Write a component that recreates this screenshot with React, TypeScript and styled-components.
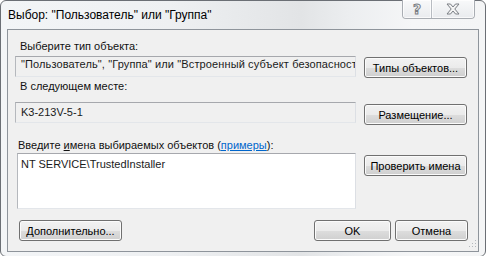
import React from 'react';
import styled, { createGlobalStyle } from 'styled-components';

const GlobalStyle = createGlobalStyle`
  html, body {
    margin: 0;
    padding: 0;
    background: #ffffff;
    overflow: hidden;
  }
`;

const Window = styled.div`
  width: 486px;
  height: 257px;
  box-sizing: border-box;
  border: 1px solid #6b6f75;
  border-radius: 6px;
  background: linear-gradient(
    to right,
    #f3f5f7 0%,
    #eef0f2 35%,
    #e2e4e6 62%,
    #eceef0 72%,
    #f5f6f7 85%,
    #f4f5f6 100%
  );
  display: flex;
  flex-direction: column;
  padding: 0 6px 4px;
  font-family: 'Liberation Sans', Arial, sans-serif;
`;

const TitleBar = styled.div`
  height: 28px;
  flex: none;
  display: flex;
  align-items: flex-start;
  justify-content: space-between;
`;

const Title = styled.div`
  margin-top: 7px;
  margin-left: 1px;
  font-size: 12px;
  line-height: 14px;
  color: #000;
`;

const CaptionGroup = styled.div`
  display: flex;
  height: 18px;
  margin-top: -1px;
  margin-right: 4px;
  border: 1px solid #a9adb3;
  border-top: none;
  border-radius: 0 0 4px 4px;
  background: linear-gradient(#f8f9fa, #e9ebee);
  overflow: hidden;
`;

const CaptionButton = styled.div<{ $w: number; $divider?: boolean }>`
  width: ${(p) => p.$w}px;
  display: flex;
  align-items: center;
  justify-content: center;
  border-right: ${(p) => (p.$divider ? '1px solid #b8bcc2' : 'none')};
  box-shadow: inset 0 0 0 1px rgba(255, 255, 255, 0.7);
`;

const HelpGlyph = styled.span`
  font-family: 'DejaVu Sans', sans-serif;
  font-size: 14px;
  font-weight: bold;
  line-height: 14px;
  color: #f4f4f4;
  -webkit-text-stroke: 1px #7a7e84;
`;

const Client = styled.div`
  position: relative;
  flex: 1;
  background: #f0f0f0;
  border: 1px solid #8e949b;
  padding: 10px 10px 0 7px;
  display: flex;
  flex-direction: column;
  font-size: 11px;
  color: #111;
`;

const Group = styled.div<{ $top?: number }>`
  display: grid;
  grid-template-columns: 341px 103px;
  column-gap: 8px;
  align-items: start;
  margin-top: ${(p) => p.$top ?? 0}px;
`;

const Label = styled.div<{ $indent?: number; $gap?: number }>`
  grid-column: 1 / 3;
  padding-left: ${(p) => p.$indent ?? 0}px;
  line-height: 13px;
  height: 13px;
  margin-bottom: ${(p) => p.$gap ?? 3}px;
  white-space: nowrap;
`;

const Field = styled.div<{ $h?: number; $white?: boolean; $pad?: number; $spacing?: number }>`
  box-sizing: border-box;
  height: ${(p) => p.$h ?? 21}px;
  border: 1px solid;
  border-color: #a6a8ad #dcdfe4 #e3e6ea #b5b8bd;
  background: ${(p) => (p.$white ? '#ffffff' : '#f0f0f0')};
  padding: ${(p) => p.$pad ?? 3}px ${(p) => (p.$white ? 3 : 5)}px 0;
  line-height: 13px;
  letter-spacing: ${(p) => p.$spacing ?? 0}px;
  white-space: nowrap;
  overflow: hidden;
  color: #1a1a1a;
`;

const Button = styled.button<{ $w?: number; $top?: number }>`
  box-sizing: border-box;
  width: ${(p) => (p.$w ? `${p.$w}px` : '100%')};
  height: 21px;
  margin-top: ${(p) => p.$top ?? 0}px;
  padding: 0 4px;
  font-family: 'Liberation Sans', Arial, sans-serif;
  font-size: 11px;
  color: #000;
  border: 1px solid #707070;
  border-radius: 3px;
  background: linear-gradient(#f2f2f2 0%, #ebebeb 50%, #dddddd 51%, #cfcfcf 100%);
  box-shadow: inset 0 0 0 1px #fbfbfb;
  white-space: nowrap;
`;

const Link = styled.span`
  color: #0066cc;
  text-decoration: underline;
`;

const Mnemonic = styled.span`
  text-decoration: underline;
`;

const Footer = styled.div`
  display: flex;
  align-items: center;
  gap: 4px;
  margin-top: 11px;
  padding-left: 4px;
`;

const Spacer = styled.div`
  flex: 1;
`;

const Grip = styled.svg`
  position: absolute;
  right: 1px;
  bottom: 3px;
`;

export default function App() {
  return (
    <>
      <GlobalStyle />
      <Window>
        <TitleBar>
          <Title>Выбор: "Пользователь" или "Группа"</Title>
          <CaptionGroup>
            <CaptionButton $w={28} $divider>
              <HelpGlyph>?</HelpGlyph>
            </CaptionButton>
            <CaptionButton $w={42}>
              <svg width="14" height="12" viewBox="0 0 14 12">
                <polygon
                  points="1,1 4.5,1 7,4 9.5,1 13,1 8.8,6 13,11 9.5,11 7,8 4.5,11 1,11 5.2,6"
                  fill="#f4f4f4"
                  stroke="#7a7e84"
                  strokeWidth="1"
                  strokeLinejoin="round"
                />
              </svg>
            </CaptionButton>
          </CaptionGroup>
        </TitleBar>
        <Client>
          <Group>
            <Label $indent={5}>Выберите тип объекта:</Label>
            <Field $pad={1} $spacing={0.12}>
              "Пользователь", "Группа" или "Встроенный субъект безопасности"
            </Field>
            <Button $top={1}>Типы объектов...</Button>
          </Group>
          <Group $top={2}>
            <Label $indent={5} $gap={9}>В следующем месте:</Label>
            <Field>K3-213V-5-1</Field>
            <Button $top={2}>Размещение...</Button>
          </Group>
          <Group $top={14}>
            <Label $indent={3} $gap={1}>
              Введите <Mnemonic>и</Mnemonic>мена выбираемых объектов (<Link>примеры</Link>):
            </Label>
            <Field $h={56} $white $pad={4} style={{ marginLeft: 2 }}>
              NT SERVICE\TrustedInstaller
            </Field>
            <Button $top={2}>Проверить имена</Button>
          </Group>
          <Footer>
            <Button $w={103}>Дополнительно...</Button>
            <Spacer />
            <Button $w={77}>OK</Button>
            <Button $w={73}>Отмена</Button>
          </Footer>
          <Grip width="8" height="8" viewBox="0 0 8 8">
            <g fill="#b4b8bd">
              <rect x="6" y="0" width="1" height="1" />
              <rect x="3" y="3" width="1" height="1" />
              <rect x="6" y="3" width="1" height="1" />
              <rect x="0" y="6" width="1" height="1" />
              <rect x="3" y="6" width="1" height="1" />
              <rect x="6" y="6" width="1" height="1" />
            </g>
          </Grip>
        </Client>
      </Window>
    </>
  );
}
